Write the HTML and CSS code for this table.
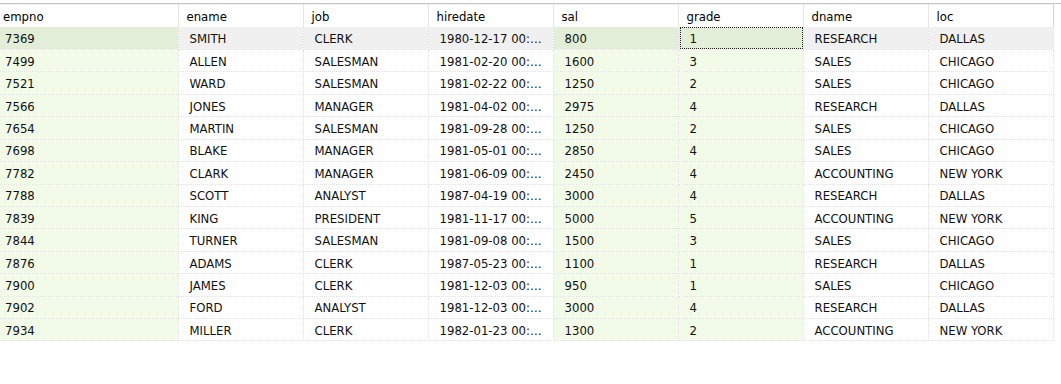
FILE: index.html
```html
<!DOCTYPE html>
<html>
<head>
<meta charset="utf-8">
<link rel="stylesheet" href="styles.css">
</head>
<body>
<div class="grid">
<table class="tbl">
<colgroup>
<col class="c-first"><col class="c"><col class="c"><col class="c"><col class="c"><col class="c"><col class="c"><col class="c">
</colgroup>
<thead>
<tr><th class="first">empno</th><th>ename</th><th>job</th><th>hiredate</th><th>sal</th><th>grade</th><th>dname</th><th>loc</th></tr>
</thead>
<tbody>
<tr class="sel"><td class="num first">7369</td><td>SMITH</td><td>CLERK</td><td>1980-12-17 00:…</td><td class="num">800</td><td class="num focus"><span class="focusbox">1</span></td><td>RESEARCH</td><td>DALLAS</td></tr>
<tr><td class="num first">7499</td><td>ALLEN</td><td>SALESMAN</td><td>1981-02-20 00:…</td><td class="num">1600</td><td class="num">3</td><td>SALES</td><td>CHICAGO</td></tr>
<tr><td class="num first">7521</td><td>WARD</td><td>SALESMAN</td><td>1981-02-22 00:…</td><td class="num">1250</td><td class="num">2</td><td>SALES</td><td>CHICAGO</td></tr>
<tr><td class="num first">7566</td><td>JONES</td><td>MANAGER</td><td>1981-04-02 00:…</td><td class="num">2975</td><td class="num">4</td><td>RESEARCH</td><td>DALLAS</td></tr>
<tr><td class="num first">7654</td><td>MARTIN</td><td>SALESMAN</td><td>1981-09-28 00:…</td><td class="num">1250</td><td class="num">2</td><td>SALES</td><td>CHICAGO</td></tr>
<tr><td class="num first">7698</td><td>BLAKE</td><td>MANAGER</td><td>1981-05-01 00:…</td><td class="num">2850</td><td class="num">4</td><td>SALES</td><td>CHICAGO</td></tr>
<tr><td class="num first">7782</td><td>CLARK</td><td>MANAGER</td><td>1981-06-09 00:…</td><td class="num">2450</td><td class="num">4</td><td>ACCOUNTING</td><td>NEW YORK</td></tr>
<tr><td class="num first">7788</td><td>SCOTT</td><td>ANALYST</td><td>1987-04-19 00:…</td><td class="num">3000</td><td class="num">4</td><td>RESEARCH</td><td>DALLAS</td></tr>
<tr><td class="num first">7839</td><td>KING</td><td>PRESIDENT</td><td>1981-11-17 00:…</td><td class="num">5000</td><td class="num">5</td><td>ACCOUNTING</td><td>NEW YORK</td></tr>
<tr><td class="num first">7844</td><td>TURNER</td><td>SALESMAN</td><td>1981-09-08 00:…</td><td class="num">1500</td><td class="num">3</td><td>SALES</td><td>CHICAGO</td></tr>
<tr><td class="num first">7876</td><td>ADAMS</td><td>CLERK</td><td>1987-05-23 00:…</td><td class="num">1100</td><td class="num">1</td><td>RESEARCH</td><td>DALLAS</td></tr>
<tr><td class="num first">7900</td><td>JAMES</td><td>CLERK</td><td>1981-12-03 00:…</td><td class="num">950</td><td class="num">1</td><td>SALES</td><td>CHICAGO</td></tr>
<tr><td class="num first">7902</td><td>FORD</td><td>ANALYST</td><td>1981-12-03 00:…</td><td class="num">3000</td><td class="num">4</td><td>RESEARCH</td><td>DALLAS</td></tr>
<tr><td class="num first">7934</td><td>MILLER</td><td>CLERK</td><td>1982-01-23 00:…</td><td class="num">1300</td><td class="num">2</td><td>ACCOUNTING</td><td>NEW YORK</td></tr>
</tbody>
</table>
</div>
</body>
</html>
```

FILE: styles.css
```css
html, body {
  margin: 0;
  padding: 0;
  background: #ffffff;
}
body {
  font-family: "DejaVu Sans Condensed", "DejaVu Sans", sans-serif;
  font-size: 13px;
  color: #101010;
}
.grid {
  margin-top: 3px;
  border-top: 1px solid #c4c4c4;
  width: 1061px;
}
.tbl {
  border-collapse: collapse;
  table-layout: fixed;
  width: 1053px;
}
.c-first { width: 178px; }
.c { width: 125px; }
th {
  height: 22px;
  padding: 0 0 0 8px;
  text-align: left;
  font-weight: normal;
  color: #000;
  background: #ffffff;
  border-right: 1px solid #e6e6e6;
  border-top: 1px solid #f2f2f2;
  white-space: nowrap;
  overflow: hidden;
}
th.first { padding-left: 3px; }
th:last-child { border-right: 1px solid #d6d6d6; }
td {
  height: 19.43px;
  padding: 2px 0 0 11px;
  white-space: nowrap;
  overflow: hidden;
  border-right: 1px dotted #e2e2e2;
  border-bottom: 1px dotted #e2e2e2;
  background: #ffffff;
  line-height: 16px;
}
td.first { padding-left: 5px; }
td.num { background: #f1fbe8; }
tr.sel td { background: #f0f0f0; }
tr.sel td.num { background: #e2eed8; }
td.focus {
  padding: 0;
}
.focusbox {
  display: block;
  margin: 0 0 0 1px;
  height: 19px;
  padding: 1px 0 0 9px;
  line-height: 19px;
  border: 1px dotted #222;
}
```
